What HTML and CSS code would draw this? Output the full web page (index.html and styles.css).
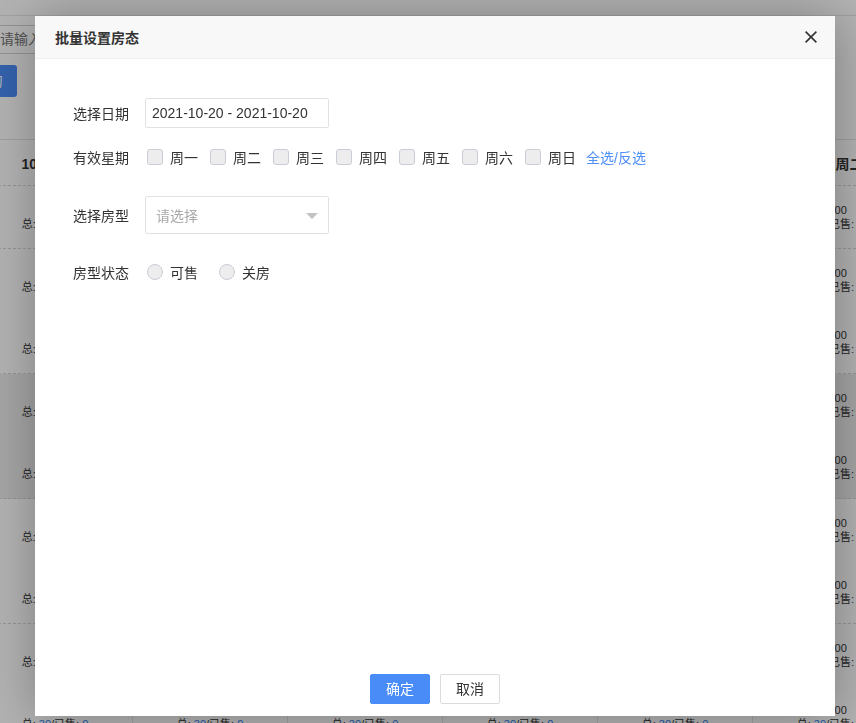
FILE: index.html
```html
<!DOCTYPE html>
<html lang="zh-CN">
<head>
<meta charset="utf-8">
<title>批量设置房态</title>
<link rel="stylesheet" href="styles.css">
</head>
<body>
<div class="page">
  <div class="topbar"></div>
  <div class="search-row"><div class="search-input">请输入房型名称</div></div>
  <div class="tool-row"><span class="btn-query">查询</span></div>
  <div class="table">
    <div class="trow thead">
      <div class="th">10/21 周四</div>
      <div class="th">10/22 周五</div>
      <div class="th">10/23 周六</div>
      <div class="th">10/24 周日</div>
      <div class="th">10/25 周一</div>
      <div class="th">10/26 周二</div>
    </div>
    <div class="trow group">
      <div class="td"><div class="sub"><span>100.00</span><span>总: <b>30</b>/已售: <b>0</b></span></div></div>
      <div class="td"><div class="sub"><span>100.00</span><span>总: <b>30</b>/已售: <b>0</b></span></div></div>
      <div class="td"><div class="sub"><span>100.00</span><span>总: <b>30</b>/已售: <b>0</b></span></div></div>
      <div class="td"><div class="sub"><span>100.00</span><span>总: <b>30</b>/已售: <b>0</b></span></div></div>
      <div class="td"><div class="sub"><span>100.00</span><span>总: <b>30</b>/已售: <b>0</b></span></div></div>
      <div class="td"><div class="sub"><span>100.00</span><span>总: <b>30</b>/已售: <b>0</b></span></div></div>
    </div>
    <div class="trow group">
      <div class="td"><div class="sub"><span>200.00</span><span>总: <b>30</b>/已售: <b>0</b></span></div><div class="sub"><span>200.00</span><span>总: <b>30</b>/已售: <b>0</b></span></div></div>
      <div class="td"><div class="sub"><span>200.00</span><span>总: <b>30</b>/已售: <b>0</b></span></div><div class="sub"><span>200.00</span><span>总: <b>30</b>/已售: <b>0</b></span></div></div>
      <div class="td"><div class="sub"><span>200.00</span><span>总: <b>30</b>/已售: <b>0</b></span></div><div class="sub"><span>200.00</span><span>总: <b>30</b>/已售: <b>0</b></span></div></div>
      <div class="td"><div class="sub"><span>200.00</span><span>总: <b>30</b>/已售: <b>0</b></span></div><div class="sub"><span>200.00</span><span>总: <b>30</b>/已售: <b>0</b></span></div></div>
      <div class="td"><div class="sub"><span>200.00</span><span>总: <b>30</b>/已售: <b>0</b></span></div><div class="sub"><span>200.00</span><span>总: <b>30</b>/已售: <b>0</b></span></div></div>
      <div class="td"><div class="sub"><span>200.00</span><span>总: <b>30</b>/已售: <b>0</b></span></div><div class="sub"><span>200.00</span><span>总: <b>30</b>/已售: <b>0</b></span></div></div>
    </div>
    <div class="trow group hover">
      <div class="td"><div class="sub"><span>200.00</span><span>总: <b>30</b>/已售: <b>0</b></span></div><div class="sub"><span>200.00</span><span>总: <b>30</b>/已售: <b>0</b></span></div></div>
      <div class="td"><div class="sub"><span>200.00</span><span>总: <b>30</b>/已售: <b>0</b></span></div><div class="sub"><span>200.00</span><span>总: <b>30</b>/已售: <b>0</b></span></div></div>
      <div class="td"><div class="sub"><span>200.00</span><span>总: <b>30</b>/已售: <b>0</b></span></div><div class="sub"><span>200.00</span><span>总: <b>30</b>/已售: <b>0</b></span></div></div>
      <div class="td"><div class="sub"><span>200.00</span><span>总: <b>30</b>/已售: <b>0</b></span></div><div class="sub"><span>200.00</span><span>总: <b>30</b>/已售: <b>0</b></span></div></div>
      <div class="td"><div class="sub"><span>200.00</span><span>总: <b>30</b>/已售: <b>0</b></span></div><div class="sub"><span>200.00</span><span>总: <b>30</b>/已售: <b>0</b></span></div></div>
      <div class="td"><div class="sub"><span>200.00</span><span>总: <b>30</b>/已售: <b>0</b></span></div><div class="sub"><span>200.00</span><span>总: <b>30</b>/已售: <b>0</b></span></div></div>
    </div>
    <div class="trow group">
      <div class="td"><div class="sub"><span>100.00</span><span>总: <b>30</b>/已售: <b>0</b></span></div><div class="sub"><span>200.00</span><span>总: <b>30</b>/已售: <b>0</b></span></div></div>
      <div class="td"><div class="sub"><span>100.00</span><span>总: <b>30</b>/已售: <b>0</b></span></div><div class="sub"><span>200.00</span><span>总: <b>30</b>/已售: <b>0</b></span></div></div>
      <div class="td"><div class="sub"><span>100.00</span><span>总: <b>30</b>/已售: <b>0</b></span></div><div class="sub"><span>200.00</span><span>总: <b>30</b>/已售: <b>0</b></span></div></div>
      <div class="td"><div class="sub"><span>100.00</span><span>总: <b>30</b>/已售: <b>0</b></span></div><div class="sub"><span>200.00</span><span>总: <b>30</b>/已售: <b>0</b></span></div></div>
      <div class="td"><div class="sub"><span>100.00</span><span>总: <b>30</b>/已售: <b>0</b></span></div><div class="sub"><span>200.00</span><span>总: <b>30</b>/已售: <b>0</b></span></div></div>
      <div class="td"><div class="sub"><span>100.00</span><span>总: <b>30</b>/已售: <b>0</b></span></div><div class="sub"><span>200.00</span><span>总: <b>30</b>/已售: <b>0</b></span></div></div>
    </div>
    <div class="trow group">
      <div class="td"><div class="sub"><span>200.00</span><span>总: <b>30</b>/已售: <b>0</b></span></div><div class="sub"><span>200.00</span><span>总: <b>30</b>/已售: <b>0</b></span></div></div>
      <div class="td"><div class="sub"><span>200.00</span><span>总: <b>30</b>/已售: <b>0</b></span></div><div class="sub"><span>200.00</span><span>总: <b>30</b>/已售: <b>0</b></span></div></div>
      <div class="td"><div class="sub"><span>200.00</span><span>总: <b>30</b>/已售: <b>0</b></span></div><div class="sub"><span>200.00</span><span>总: <b>30</b>/已售: <b>0</b></span></div></div>
      <div class="td"><div class="sub"><span>200.00</span><span>总: <b>30</b>/已售: <b>0</b></span></div><div class="sub"><span>200.00</span><span>总: <b>30</b>/已售: <b>0</b></span></div></div>
      <div class="td"><div class="sub"><span>200.00</span><span>总: <b>30</b>/已售: <b>0</b></span></div><div class="sub"><span>200.00</span><span>总: <b>30</b>/已售: <b>0</b></span></div></div>
      <div class="td"><div class="sub"><span>200.00</span><span>总: <b>30</b>/已售: <b>0</b></span></div><div class="sub"><span>200.00</span><span>总: <b>30</b>/已售: <b>0</b></span></div></div>
    </div>
  </div>
</div>

<div class="shade"></div>

<div class="dialog">
  <div class="dlg-head">
    <span class="dlg-title">批量设置房态</span>
    <svg class="dlg-close" width="12" height="12" viewBox="0 0 12 12"><path d="M0.6 0.6 L11.4 11.4 M11.4 0.6 L0.6 11.4" stroke="#333" stroke-width="1.6" fill="none"/></svg>
  </div>
  <div class="dlg-body">
    <div class="form-row r1">
      <label class="form-label">选择日期</label>
      <div class="date-input">2021-10-20 - 2021-10-20</div>
    </div>
    <div class="form-row r2">
      <label class="form-label">有效星期</label>
      <div class="checks">
        <span class="check"><i class="cbox"></i>周一</span>
        <span class="check"><i class="cbox"></i>周二</span>
        <span class="check"><i class="cbox"></i>周三</span>
        <span class="check"><i class="cbox"></i>周四</span>
        <span class="check"><i class="cbox"></i>周五</span>
        <span class="check"><i class="cbox"></i>周六</span>
        <span class="check last"><i class="cbox"></i>周日</span>
        <a class="link">全选/反选</a>
      </div>
    </div>
    <div class="form-row r3">
      <label class="form-label">选择房型</label>
      <div class="select"><span class="placeholder">请选择</span><i class="caret"></i></div>
    </div>
    <div class="form-row r4">
      <label class="form-label">房型状态</label>
      <div class="radios">
        <span class="radio"><i class="rcircle"></i>可售</span>
        <span class="radio"><i class="rcircle"></i>关房</span>
      </div>
    </div>
  </div>
  <div class="dlg-foot">
    <span class="btn btn-primary">确定</span>
    <span class="btn btn-default">取消</span>
  </div>
</div>
</body>
</html>
```

FILE: styles.css
```css
* { box-sizing: border-box; }
html, body { margin: 0; padding: 0; }
body {
  width: 856px;
  height: 723px;
  overflow: hidden;
  background: #fff;
  font-family: "Liberation Sans", "Noto Sans CJK SC", sans-serif;
  font-size: 14px;
  color: #333;
}

/* background page */
.page { width: 856px; overflow: hidden; }
.topbar { height: 16px; border-bottom: 1px solid #e6e6e6; }
.search-row { margin-top: 9px; }
.search-input {
  margin-left: -11px;
  width: 220px;
  height: 29px;
  border: 1px solid #d2d2d2;
  padding-left: 10px;
  line-height: 27px;
  color: #757575;
  font-size: 14px;
}
.tool-row { margin-top: 11px; height: 32px; }
.btn-query {
  display: block;
  margin-left: -40px;
  width: 57px;
  height: 32px;
  line-height: 32px;
  text-align: center;
  background: #4a8cf7;
  color: #fff;
  border-radius: 3px;
}
.table { margin-top: 42px; }
.trow {
  display: grid;
  grid-template-columns: repeat(6, 155px);
  margin-left: -22px;
}
.thead {
  height: 47px;
  border-top: 1px solid #e2e2e2;
  border-bottom: 1px dashed #d6d6d6;
}
.th {
  display: flex;
  align-items: center;
  justify-content: center;
  font-weight: bold;
  color: #333;
  border-right: 1px solid #e6e6e6;
}
.group { border-bottom: 1px dashed #d6d6d6; }
.group.hover { background: #ececec; }
.td { border-right: 1px solid #e6e6e6; }
.sub {
  height: 62px;
  display: flex;
  flex-direction: column;
  align-items: center;
  justify-content: center;
  font-size: 11px;
  line-height: 14px;
  color: #333;
}
.group:first-of-type .sub { height: 61px; }
.sub b { font-weight: normal; color: #2d7cf0; }

/* overlay */
.shade {
  position: fixed;
  inset: 0;
  background: rgba(0, 0, 0, 0.3);
}

/* dialog */
.dialog {
  position: fixed;
  left: 35px;
  top: 16px;
  width: 800px;
  height: 700px;
  background: #fff;
  box-shadow: 1px 1px 50px rgba(0, 0, 0, 0.3);
  display: flex;
  flex-direction: column;
}
.dlg-head {
  height: 43px;
  display: flex;
  align-items: center;
  justify-content: space-between;
  padding: 0 18px 0 20px;
  background: #f8f8f8;
  border-bottom: 1px solid #eee;
}
.dlg-title { font-size: 14px; color: #333; font-weight: 600; }
.dlg-close { display: block; }

.dlg-body { flex: 1; padding-top: 39px; }
.form-row { display: flex; align-items: center; }
.form-label {
  width: 110px;
  padding-right: 16px;
  text-align: right;
  color: #333;
  font-size: 14px;
}
.r1 { height: 30px; }
.r2 { height: 30px; margin-top: 14px; }
.r3 { height: 38px; margin-top: 24px; }
.r4 { height: 30px; margin-top: 23px; }

.date-input {
  width: 184px;
  height: 30px;
  border: 1px solid #e2e2e2;
  border-radius: 2px;
  padding-left: 6px;
  line-height: 28px;
  color: #333;
}

.checks { display: flex; align-items: center; }
.check {
  display: flex;
  align-items: center;
  margin-right: 12px;
  color: #333;
}
.check.last { margin-right: 10px; }
.cbox {
  width: 16px;
  height: 16px;
  margin-left: 2px;
  margin-right: 7px;
  border: 1px solid #c9cdd5;
  border-radius: 3px;
  background: #ededed;
}
.check:not(:first-child) .cbox { margin-left: 0; }
.link { color: #4e8ef7; }

.select {
  width: 184px;
  height: 38px;
  border: 1px solid #e2e2e2;
  border-radius: 2px;
  padding: 0 10px;
  display: flex;
  align-items: center;
  justify-content: space-between;
}
.placeholder { color: #a9a9a9; }
.caret {
  width: 0;
  height: 0;
  border-left: 6px solid transparent;
  border-right: 6px solid transparent;
  border-top: 6px solid #c2c2c2;
  margin-top: 2px;
}

.radios { display: flex; align-items: center; }
.radio { display: flex; align-items: center; margin-right: 21px; color: #333; }
.rcircle {
  width: 16px;
  height: 16px;
  margin-left: 2px;
  margin-right: 7px;
  border: 1px solid #c9cdd5;
  border-radius: 50%;
  background: #ededed;
}
.radio + .radio .rcircle { margin-left: 0; }

.dlg-foot {
  display: flex;
  justify-content: center;
  gap: 10px;
  padding-bottom: 12px;
}
.btn {
  width: 60px;
  height: 30px;
  line-height: 28px;
  text-align: center;
  border-radius: 2px;
  font-size: 14px;
}
.btn-primary { background: #4a8cf7; border: 1px solid #4a8cf7; color: #fff; }
.btn-default { background: #fff; border: 1px solid #dcdcdc; color: #333; }
```
